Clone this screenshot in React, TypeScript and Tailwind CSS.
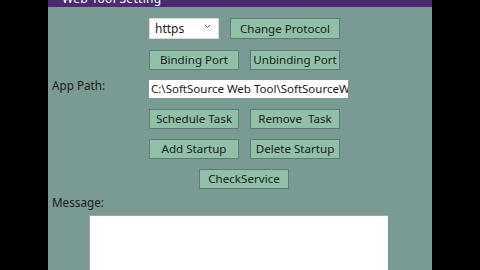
import React from "react";

const Btn = ({label, w = "w-[90px]"}: {label: string; w?: string}) => (
  <button
    className={`${w} h-[20px] bg-[#90c1a8] border border-[#5f7d74] text-[11.6px] leading-none text-[#1a1a1a] flex items-center justify-center whitespace-pre`}
  >
    {label}
  </button>
);

const App = () => {
  return (
    <div
      className="w-[480px] h-[270px] bg-black flex overflow-hidden"
      style={{fontFamily: '"Noto Sans", "Open Sans", sans-serif'}}
    >
      <div className="ml-[48px] w-[384px] h-full bg-[#7a9b94] flex flex-col">
        <div className="h-[7px] bg-[#4a2c72] overflow-hidden">
          <div className="ml-[14px] -mt-[7px] text-white text-[12px] leading-[12px] tracking-wide">Web Tool Setting</div>
        </div>

        <div className="flex flex-col pl-[101px] pt-[11px]">
          <div className="flex gap-[11px]">
            <div className="w-[70px] h-[21px] bg-white border border-[#d9d9d9] flex items-center justify-between pl-[5px] pr-[7px] text-[12px] text-[#1a1a1a]">
              <span>https</span>
              <svg width="7" height="5" viewBox="0 0 7 5" className="mb-[4px]">
                <path d="M1 1 L3.5 3.5 L6 1" stroke="#555" strokeWidth="1" fill="none" />
              </svg>
            </div>
            <Btn label="Change Protocol" w="w-[110px] h-[21px]" />
          </div>

          <div className="flex gap-[11px] mt-[11px]">
            <Btn label="Binding Port" />
            <Btn label="Unbinding Port" />
          </div>
        </div>

        <div className="flex mt-[10px] pl-[4px]">
          <div className="w-[97px] text-[11.7px] text-[#1a1a1a] leading-none">App Path:</div>
          <div className="w-[199px] h-[18px] bg-white overflow-hidden whitespace-nowrap text-[11.5px] leading-[18px] text-[#1a1a1a] pl-[2px]">
            C:\SoftSource Web Tool\SoftSourceWebTool\Service
          </div>
        </div>

        <div className="flex flex-col pl-[101px] mt-[11px] gap-[10px]">
          <div className="flex gap-[11px]">
            <Btn label="Schedule Task" />
            <Btn label="Remove  Task" />
          </div>
          <div className="flex gap-[11px]">
            <Btn label="Add Startup" />
            <Btn label="Delete Startup" />
          </div>
          <div className="flex pl-[50px]">
            <Btn label="CheckService" />
          </div>
        </div>

        <div className="pl-[4px] mt-[8px] text-[11.7px] text-[#1a1a1a] leading-none">Message:</div>
        <div className="ml-[41px] mt-[6px] w-[299px] flex-1 bg-white border-l border-t border-[#9aa9a4]" />
      </div>
    </div>
  );
};

export default App;
